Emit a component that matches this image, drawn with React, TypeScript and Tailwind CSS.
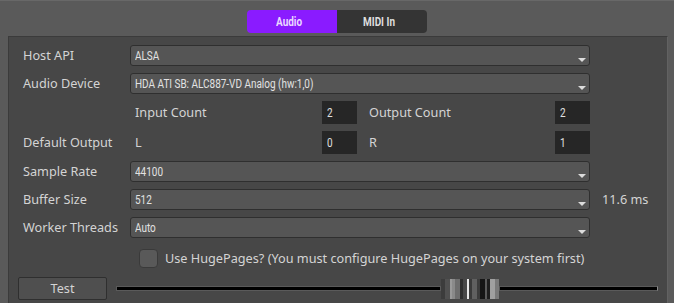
import type { ReactNode } from 'react';

const LABEL = "font-['Noto_Sans',sans-serif] text-[12.7px] text-[#d4d4d4] whitespace-nowrap";
const NARROW = "inline-block origin-left scale-x-[0.83] whitespace-nowrap font-['Roboto',sans-serif] text-[12px]";

const THUMB = [
  [0, 4, '#3c3c3c'],
  [4, 5, '#505050'],
  [9, 2, '#9a9a9a'],
  [11, 3, '#8a8a8a'],
  [14, 5, '#6e6e6e'],
  [19, 3, '#2e2e2e'],
  [22, 4, '#474747'],
  [26, 2, '#e8e8e8'],
  [28, 3, '#3a3a3a'],
  [31, 5, '#606060'],
  [36, 3, '#3c3c3c'],
  [39, 5, '#151515'],
  [44, 2, '#5a5a5a'],
  [46, 3, '#1e1e1e'],
  [49, 5, '#a0a0a0'],
  [54, 4, '#7a7a7a'],
] as const;

function Combo({ value }: { value: string }) {
  return (
    <div className="relative flex h-[21px] w-[460px] items-center rounded-[3px] border border-[#2f2f2f] bg-[#555555] pl-[4px]">
      <span className={`${NARROW} text-[#e2e2e2]`}>{value}</span>
      <svg className="absolute right-[3px] top-[12px]" width="8" height="4" viewBox="0 0 8 4">
        <path d="M0 0h8L4 4z" fill="#dcdcdc" />
      </svg>
    </div>
  );
}

function NumBox({ value }: { value: string }) {
  return (
    <div className="flex h-[23px] w-[35px] items-center bg-[#262626] pl-[5px]">
      <span className={`${NARROW} text-[#e0e0e0]`}>{value}</span>
    </div>
  );
}

function Row({ label, children }: { label?: string; children: ReactNode }) {
  return (
    <div className="flex items-center pl-[5px]">
      <div className={`w-[107px] ${LABEL}`}>{label}</div>
      {children}
    </div>
  );
}

function Pair({ a, av, b, bv }: { a: string; av: string; b: string; bv: string }) {
  return (
    <div className="flex w-[460px] items-center">
      <div className="flex w-[227px] items-center">
        <span className={`flex-1 pl-[5px] ${LABEL}`}>{a}</span>
        <NumBox value={av} />
      </div>
      <div className="flex flex-1 items-center">
        <span className={`flex-1 pl-[12px] ${LABEL}`}>{b}</span>
        <NumBox value={bv} />
      </div>
    </div>
  );
}

export default function App() {
  return (
    <div className="h-[303px] w-[674px] overflow-hidden border-t border-[#686868] bg-[#5a5a5a]">
      {/* tabs */}
      <div className="flex justify-center pt-[9px]">
        <div className="flex h-[23px] overflow-hidden rounded-[4px]">
          <div className="flex w-[90px] items-center justify-center bg-[#8a1bff]">
            <span className={`${NARROW} origin-center font-bold text-[#ead8ff]`}>Audio</span>
          </div>
          <div className="flex w-[90px] items-center justify-center bg-[#343434]">
            <span className={`${NARROW} origin-center font-bold text-[#dedede]`}>MIDI In</span>
          </div>
        </div>
      </div>

      {/* settings panel */}
      <div className="ml-[8px] mt-[3px] h-[270px] w-[660px] border-l border-t border-r border-[#3b3b3b] border-r-[#626262] bg-[#474747] pl-[9px] pr-[9px] pt-[8px]">
        <div className="flex flex-col gap-[7px]">
          <Row label="Host API">
            <Combo value="ALSA" />
          </Row>
          <Row label="Audio Device">
            <Combo value="HDA ATI SB: ALC887-VD Analog (hw:1,0)" />
          </Row>
          <Row>
            <Pair a="Input Count" av="2" b="Output Count" bv="2" />
          </Row>
          <Row label="Default Output">
            <Pair a="L" av="0" b="R" bv="1" />
          </Row>
          <Row label="Sample Rate">
            <Combo value="44100" />
          </Row>
          <Row label="Buffer Size">
            <Combo value="512" />
            <span className={`ml-[12px] ${LABEL}`}>11.6 ms</span>
          </Row>
          <Row label="Worker Threads">
            <Combo value="Auto" />
          </Row>

          <div className="mt-[4px] flex items-center">
            <div className="ml-[121px] h-[19px] w-[19px] rounded-[4px] border border-[#3a3a3a] bg-[#595959]" />
            <span className={`ml-[7px] ${LABEL}`}>
              Use HugePages? (You must configure HugePages on your system first)
            </span>
          </div>

          <div className="mt-[2px] flex items-center">
            <button className="flex h-[23px] w-[89px] items-center justify-center rounded-[2px] border border-[#2f2f2f] bg-[#4f4f4f]">
              <span className={LABEL}>Test</span>
            </button>
            <div className="ml-[9px] flex flex-1 items-center">
              <div className="h-[5px] w-[325px] border border-[#5a5a5a] bg-black" />
              <svg width="58" height="20" viewBox="0 0 58 20">
                {THUMB.map(([x, w, c], i) => (
                  <rect key={i} x={x} y={0} width={w} height={20} fill={c} />
                ))}
              </svg>
              <div className="h-[5px] flex-1 border border-[#5a5a5a] border-r-[#8a8a8a] bg-black" />
            </div>
          </div>
        </div>
      </div>
    </div>
  );
}
